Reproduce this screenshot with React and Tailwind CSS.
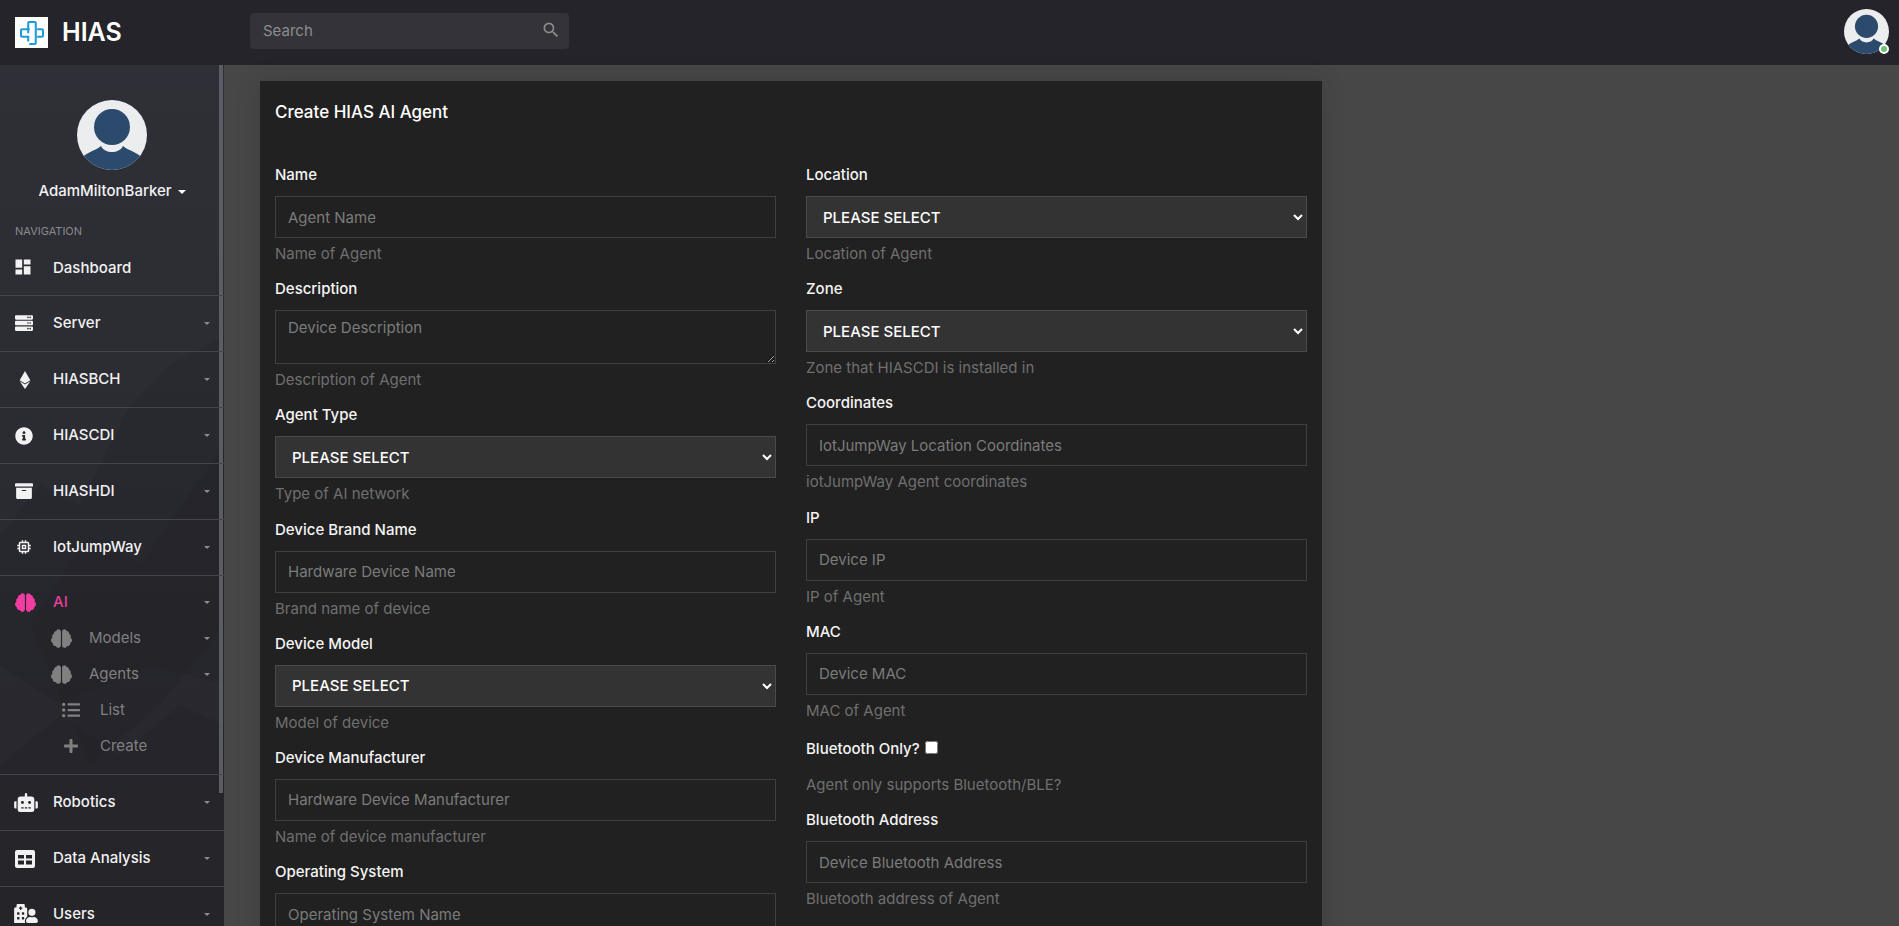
import React from "react";
import { MdDashboard, MdSearch, MdMemory } from "react-icons/md";
import {
  FaServer,
  FaEthereum,
  FaInfoCircle,
  FaArchive,
  FaBrain,
  FaListUl,
  FaPlus,
  FaRobot,
  FaHospitalUser,
} from "react-icons/fa";

const Avatar = ({ className, id }) => (
  <svg viewBox="0 0 70 70" className={className}>
    <defs>
      <clipPath id={id}>
        <circle cx="35" cy="35" r="35" />
      </clipPath>
    </defs>
    <g clipPath={`url(#${id})`}>
      <rect width="70" height="70" fill="#ecedee" />
      <path d="M0 70 L6 57 C10 52 18 51 24 46 C28 54 42 54 46 46 C52 51 60 52 64 57 L70 70 Z" fill="#2c4a6b" />
      <ellipse cx="35" cy="27" rx="18" ry="18" fill="#2c4a6b" />
    </g>
  </svg>
);

const Logo = () => (
  <div className="w-[33px] h-[31px] bg-white flex items-center justify-center">
    <svg viewBox="0 0 70 70" className="w-[24px] h-[24px]" fill="none" stroke="#1f9ad6" strokeWidth="6">
      <path d="M24 36 V6 a3 3 0 0 1 3-3 h16 a3 3 0 0 1 3 3 V64 a3 3 0 0 1 -3 3 H27" />
      <path d="M28 24 H6 a3 3 0 0 0 -3 3 v16 a3 3 0 0 0 3 3 H24 V60" />
      <path d="M50 24 H64 a3 3 0 0 1 3 3 v16 a3 3 0 0 1 -3 3 H50" />
    </svg>
  </div>
);

// two-by-two table glyph used on the Data Analysis row
const TableIcon = () => (
  <svg viewBox="0 0 20 18" className="w-[20px] h-[18px]">
    <path
      fillRule="evenodd"
      fill="currentColor"
      d="M2 0 H18 a2 2 0 0 1 2 2 V16 a2 2 0 0 1 -2 2 H2 a2 2 0 0 1 -2 -2 V2 a2 2 0 0 1 2 -2 Z M3 5 V8.5 H9 V5 Z M11 5 V8.5 H17 V5 Z M3 10.5 V14.5 H9 V10.5 Z M11 10.5 V14.5 H17 V10.5 Z"
    />
  </svg>
);

const Caret = () => (
  <span className="ml-auto mr-[14px] w-0 h-0 border-x-[3px] border-t-[3px] border-x-transparent border-t-[#8c8c8c]" />
);

const navTop = [
  { label: "Dashboard", icon: <MdDashboard className="w-[20px] h-[20px] -ml-[2px] -mt-[3px]" />, noCaret: true, height: "h-[55px]" },
  { label: "Server", icon: <FaServer className="w-[18px] h-[18px] -mt-[2px]" /> },
  { label: "HIASBCH", icon: <FaEthereum className="w-[18px] h-[18px] ml-[1px]" /> },
  { label: "HIASCDI", icon: <FaInfoCircle className="w-[18px] h-[18px]" /> },
  { label: "HIASHDI", icon: <FaArchive className="w-[18px] h-[18px] -mt-[2px]" /> },
  { label: "IotJumpWay", icon: <MdMemory className="w-[18px] h-[18px] -mt-[1px]" /> },
];

const navBottom = [
  { label: "Robotics", icon: <FaRobot className="w-[24px] h-[19px] -ml-[1px]" /> },
  { label: "Data Analysis", icon: <TableIcon /> },
  { label: "Users", icon: <FaHospitalUser className="w-[24px] h-[19px] -ml-[1px] -mt-[2px]" /> },
];

const NavRow = ({ item }) => (
  <div className={`${item.height || "h-[56px]"} flex items-center border-b border-[#44444c] pl-[15px] text-[15px] font-medium text-[#f2f2f2]`}>
    <span className="w-[38px] shrink-0">{item.icon}</span>
    <span>{item.label}</span>
    {!item.noCaret && <Caret />}
  </div>
);

const SubRow = ({ icon, label, indent, caret }) => (
  <div className={`h-[36px] flex items-center text-[15px] text-[#808080] ${indent}`}>
    {icon}
    <span>{label}</span>
    {caret && <Caret />}
  </div>
);

// faint mountain texture behind the nav
const SidebarTexture = () => (
  <svg viewBox="0 0 224 861" className="absolute inset-0 w-[224px] h-[861px] pointer-events-none" fill="#000000">
    <path opacity="0.06" d="M0 470 L40 420 L80 440 L130 340 L170 300 L224 270 V620 L150 600 L60 640 L0 600 Z" />
    <path opacity="0.05" d="M30 560 L90 470 L140 500 L224 380 V560 L160 640 L90 700 Z" />
    <path opacity="0.05" d="M0 700 L60 650 L120 690 L180 640 L224 660 V861 H0 Z" />
  </svg>
);

const Sidebar = () => (
  <aside className="relative w-[224px] shrink-0 bg-gradient-to-b from-[#2f2f37] to-[#26262c] overflow-hidden">
    <SidebarTexture />
    <div className="absolute top-0 right-[1px] w-[4px] h-[728px] bg-[#5c5c64]" />
    <div className="relative">
      <div className="pt-[35px] flex flex-col items-center">
        <Avatar id="sideAvatar" className="w-[70px] h-[70px]" />
        <div className="mt-[11px] h-[21px] flex items-center text-[15px] font-medium text-[#f2f2f2]">
          AdamMiltonBarker
          <span className="ml-[6px] w-0 h-0 border-x-[4px] border-t-[4px] border-x-transparent border-t-white" />
        </div>
      </div>
      <div className="mt-[21px] pl-[15px] h-[16px] text-[11px] leading-[16px] text-[#8a8a8a]">NAVIGATION</div>
      <nav className="mt-[2px]">
        {navTop.map((item) => (
          <NavRow key={item.label} item={item} />
        ))}
        <div className="pt-[8px] pb-[10px] border-b border-[#44444c]">
          <div className="h-[36px] flex items-center pl-[15px] text-[15px] font-medium text-[#e83e9c]">
            <span className="w-[38px] shrink-0">
              <FaBrain className="w-[21px] h-[19px] text-[#f23da0]" />
            </span>
            <span>AI</span>
            <Caret />
          </div>
          <SubRow icon={<FaBrain className="w-[21px] h-[19px] mr-[17px]" />} label="Models" indent="pl-[51px]" caret />
          <SubRow icon={<FaBrain className="w-[21px] h-[19px] mr-[17px]" />} label="Agents" indent="pl-[51px]" caret />
          <SubRow icon={<FaListUl className="w-[18px] h-[18px] mr-[20px]" />} label="List" indent="pl-[62px]" />
          <SubRow icon={<FaPlus className="w-[16px] h-[16px] mr-[21px]" />} label="Create" indent="pl-[63px]" />
        </div>
        {navBottom.map((item) => (
          <NavRow key={item.label} item={item} />
        ))}
      </nav>
    </div>
  </aside>
);

const Field = ({ label, hint, children }) => (
  <div className="mb-[14.2px]">
    <label className="block h-[21px] leading-[21px] mb-[11px] text-[15px] font-medium text-[#f5f5f5]">{label}</label>
    {children}
    {hint && <p className="mt-[5px] h-[21px] leading-[21px] text-[15px] text-[#6f6f6f]">{hint}</p>}
  </div>
);

const TextInput = ({ placeholder }) => (
  <input
    type="text"
    placeholder={placeholder}
    className="block w-full h-[42px] px-[12px] bg-[#212121] border border-[#3f3f3f] text-[15px] text-white placeholder:text-[#7b7b7b] outline-none"
  />
);

const Select = () => (
  <select className="block w-full h-[42px] pl-[12px] bg-[#333333] border border-[#4a4a4a] text-[15px] font-medium text-white outline-none">
    <option>PLEASE SELECT</option>
  </select>
);

const leftFields = [
  { label: "Name", hint: "Name of Agent", placeholder: "Agent Name" },
  { label: "Description", hint: "Description of Agent", textarea: "Device Description" },
  { label: "Agent Type", hint: "Type of AI network", select: true },
  { label: "Device Brand Name", hint: "Brand name of device", placeholder: "Hardware Device Name" },
  { label: "Device Model", hint: "Model of device", select: true },
  { label: "Device Manufacturer", hint: "Name of device manufacturer", placeholder: "Hardware Device Manufacturer" },
  { label: "Operating System", placeholder: "Operating System Name" },
];

const rightTop = [
  { label: "Location", hint: "Location of Agent", select: true },
  { label: "Zone", hint: "Zone that HIASCDI is installed in", select: true },
  { label: "Coordinates", hint: "iotJumpWay Agent coordinates", placeholder: "IotJumpWay Location Coordinates" },
  { label: "IP", hint: "IP of Agent", placeholder: "Device IP" },
  { label: "MAC", hint: "MAC of Agent", placeholder: "Device MAC" },
];

const renderField = (f) => (
  <Field key={f.label} label={f.label} hint={f.hint}>
    {f.select && <Select />}
    {f.placeholder && <TextInput placeholder={f.placeholder} />}
    {f.textarea && (
      <textarea
        placeholder={f.textarea}
        className="block w-full h-[54px] px-[12px] py-[6px] bg-[#212121] border border-[#3f3f3f] text-[15px] text-white placeholder:text-[#7b7b7b] outline-none"
      />
    )}
  </Field>
);

export default function App() {
  return (
    <div className="h-screen flex flex-col overflow-hidden bg-[#474747] font-[Inter,sans-serif]">
      <header className="h-[65px] shrink-0 flex items-center bg-[#25242b]">
        <div className="ml-[15px] w-[235px] flex items-center">
          <Logo />
          <span className="ml-[14px] text-[25px] font-semibold text-white">HIAS</span>
        </div>
        <div className="w-[319px] h-[36px] -mt-[3px] flex items-center justify-between pl-[13px] pr-[8px] rounded bg-[#34333a] text-[15px] text-[#8c8c8c]">
          <span>Search</span>
          <MdSearch className="w-[20px] h-[20px] -mt-[2px]" />
        </div>
        <div className="ml-auto mr-[10px] relative w-[45px] h-[45px] -mt-[2px]">
          <Avatar id="headerAvatar" className="w-[45px] h-[45px]" />
          <span className="absolute right-0 bottom-0 w-[10px] h-[10px] rounded-full bg-[#6fbf73] border-2 border-white" />
        </div>
      </header>
      <div className="flex flex-1 min-h-0">
        <Sidebar />
        <main className="flex-1 min-w-0 pt-[16px] pl-[36px]">
          <section className="w-[1062px] h-[900px] bg-[#212121] px-[15px] pt-[19px] shadow-[0_0_25px_rgba(0,0,0,0.12)]">
            <h2 className="h-[24px] leading-[24px] mb-[40px] text-[17px] font-medium text-white">Create HIAS AI Agent</h2>
            <div className="grid grid-cols-2 gap-x-[30px]">
              <div>{leftFields.map(renderField)}</div>
              <div>
                {rightTop.map(renderField)}
                <div className="pt-[4px] mb-[14.2px]">
                  <label className="flex items-center h-[21px] mb-[14px] text-[15px] font-medium text-[#f5f5f5]">
                    Bluetooth Only?
                    <input type="checkbox" className="ml-[5px] -mt-[4px]" />
                  </label>
                  <p className="h-[21px] leading-[21px] text-[15px] text-[#6f6f6f]">Agent only supports Bluetooth/BLE?</p>
                </div>
                {renderField({ label: "Bluetooth Address", hint: "Bluetooth address of Agent", placeholder: "Device Bluetooth Address" })}
              </div>
            </div>
          </section>
        </main>
      </div>
    </div>
  );
}
